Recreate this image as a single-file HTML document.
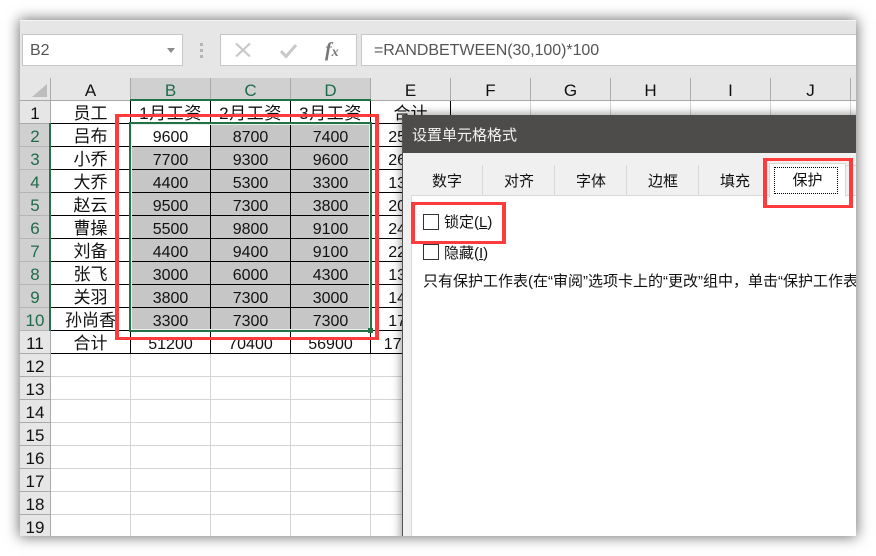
<!DOCTYPE html>
<html lang="zh"><head><meta charset="utf-8"><title>设置单元格格式</title>
<style>
*{box-sizing:border-box}
html,body{margin:0;padding:0;width:876px;height:556px;background:#fff;overflow:hidden}
body{font-family:"Liberation Sans","Noto Sans CJK SC",sans-serif;color:#222}
.a{position:absolute}
#win{position:absolute;left:20px;top:20px;width:836px;height:516px;background:#fff;overflow:hidden;box-shadow:0 0 13px 1px rgba(0,0,0,.55)}
#w{position:absolute;left:-20px;top:-20px;width:876px;height:556px;overflow:hidden}
.box{position:absolute;background:#fff;border:1px solid #c6c6c6;top:34px;height:32px}
.ch{position:absolute;top:78px;height:22px;width:80px;text-align:center;font-size:17px;line-height:25px;color:#111;border-right:1px solid #aaa}
.ch.s{background:#d0d0d0;color:#1f6b4b}
.rh{position:absolute;left:20px;width:30px;height:23px;text-align:center;font-size:17px;line-height:26px;background:#e6e6e6;color:#111;border-bottom:1px solid #aaa;overflow:hidden}
.rh.s{background:#d0d0d0;color:#1f6b4b;border-bottom-color:#b5b5b5}
#t{position:absolute;left:51px;top:101px;border-collapse:separate;border-spacing:0;table-layout:fixed;width:400px}
#t td{width:80px;height:23px;padding:5px 0 0;border-right:1px solid #000;border-bottom:1px solid #000;text-align:center;font-size:16px;line-height:17px;color:#111;overflow:hidden;white-space:nowrap}
#t td.g{background:#c6c6c6}
#t td.c{font-size:17px;padding-top:4px;line-height:18px}
#t td.h{letter-spacing:.6px}
.red{position:absolute;border-style:solid;border-color:#ff3b3b;border-width:3px 4px}
.tab{position:absolute;top:165px;height:30px;width:72px;text-align:center;font-size:15px;line-height:34px;border-right:1px solid #d9d9d9;background:#f0f0f0;padding-left:1px;color:#111}
</style></head><body>
<div id="win"><div id="w">
<div class="a" style="left:20px;top:20px;width:836px;height:80px;background:#e6e6e6"></div>
<div class="a" style="left:20px;top:20px;width:836px;height:1px;background:#f4f4f4"></div>

<div class="box" style="left:22px;width:161px"></div>
<div class="a" style="left:30px;top:41px;font-size:16px;line-height:20px;color:#555">B2</div>
<svg class="a" style="left:167px;top:48px" width="9" height="5"><path d="M0 0H8L4 5Z" fill="#8a8a8a"/></svg>
<div class="a" style="left:200px;top:43px;width:3px;height:3px;background:#b4b4b4"></div>
<div class="a" style="left:200px;top:49px;width:3px;height:3px;background:#b4b4b4"></div>
<div class="a" style="left:200px;top:55px;width:3px;height:3px;background:#b4b4b4"></div>
<div class="box" style="left:220px;width:137px"></div>
<svg class="a" style="left:234px;top:42px" width="18" height="16"><path d="M2 1.5L16 14.5M16 1.5L2 14.5" stroke="#c8c8c8" stroke-width="2.2" fill="none"/></svg>
<svg class="a" style="left:279px;top:42px" width="19" height="17"><path d="M2 9L7 14.5L17 3" stroke="#c8c8c8" stroke-width="3" fill="none"/></svg>
<div class="a" style="left:325px;top:38px;font-family:'Liberation Serif',serif;font-style:italic;font-weight:bold;font-size:20px;line-height:24px;color:#777">f<span style="font-size:14px">x</span></div>
<div class="box" style="left:361px;width:496px"></div>
<div class="a" style="left:374px;top:41px;font-size:16px;line-height:20px;color:#555;white-space:nowrap;letter-spacing:-.05px">=RANDBETWEEN(30,100)*100</div>

<svg class="a" style="left:20px;top:78px" width="31" height="23"><path d="M27 6V19H12Z" fill="#bdbdbd"/><path d="M30.5 0V23" stroke="#aaa"/></svg>
<div class="ch" style="left:51px">A</div>
<div class="ch s" style="left:131px">B</div>
<div class="ch s" style="left:211px">C</div>
<div class="ch s" style="left:291px">D</div>
<div class="ch" style="left:371px">E</div>
<div class="ch" style="left:451px">F</div>
<div class="ch" style="left:531px">G</div>
<div class="ch" style="left:611px">H</div>
<div class="ch" style="left:691px">I</div>
<div class="ch" style="left:771px">J</div>
<div class="a" style="left:20px;top:100px;width:836px;height:1px;background:#a8a8a8"></div>
<div class="a" style="left:130px;top:99px;width:241px;height:2px;background:#217346"></div>

<div class="rh" style="top:101px;height:23px">1</div>
<div class="rh s" style="top:124px">2</div>
<div class="rh s" style="top:147px">3</div>
<div class="rh s" style="top:170px">4</div>
<div class="rh s" style="top:193px">5</div>
<div class="rh s" style="top:216px">6</div>
<div class="rh s" style="top:239px">7</div>
<div class="rh s" style="top:262px">8</div>
<div class="rh s" style="top:285px">9</div>
<div class="rh s" style="top:308px">10</div>
<div class="rh" style="top:331px">11</div>
<div class="rh" style="top:354px">12</div>
<div class="rh" style="top:377px">13</div>
<div class="rh" style="top:400px">14</div>
<div class="rh" style="top:423px">15</div>
<div class="rh" style="top:446px">16</div>
<div class="rh" style="top:469px">17</div>
<div class="rh" style="top:492px">18</div>
<div class="rh" style="top:515px">19</div>
<div class="a" style="left:50px;top:101px;width:1px;height:435px;background:#aaa"></div>
<div class="a" style="left:49px;top:123px;width:2px;height:208px;background:#217346"></div>

<div class="a" style="left:51px;top:101px;width:805px;height:435px;background-image:linear-gradient(to right,#d4d4d4 1px,transparent 1px),linear-gradient(to bottom,#d4d4d4 1px,transparent 1px);background-size:80px 23px;background-position:79px 22px"></div>

<table id="t">
<tr><td class="c">员工</td><td class="c h">1月工资</td><td class="c h">2月工资</td><td class="c h">3月工资</td><td class="c">合计</td></tr>
<tr><td class="c">吕布</td><td>9600</td><td class="g">8700</td><td class="g">7400</td><td>25700</td></tr>
<tr><td class="c">小乔</td><td class="g">7700</td><td class="g">9300</td><td class="g">9600</td><td>26600</td></tr>
<tr><td class="c">大乔</td><td class="g">4400</td><td class="g">5300</td><td class="g">3300</td><td>13000</td></tr>
<tr><td class="c">赵云</td><td class="g">9500</td><td class="g">7300</td><td class="g">3800</td><td>20600</td></tr>
<tr><td class="c">曹操</td><td class="g">5500</td><td class="g">9800</td><td class="g">9100</td><td>24400</td></tr>
<tr><td class="c">刘备</td><td class="g">4400</td><td class="g">9400</td><td class="g">9100</td><td>22900</td></tr>
<tr><td class="c">张飞</td><td class="g">3000</td><td class="g">6000</td><td class="g">4300</td><td>13300</td></tr>
<tr><td class="c">关羽</td><td class="g">3800</td><td class="g">7300</td><td class="g">3000</td><td>14100</td></tr>
<tr><td class="c">孙尚香</td><td class="g">3300</td><td class="g">7300</td><td class="g">7300</td><td>17900</td></tr>
<tr><td class="c">合计</td><td>51200</td><td>70400</td><td>56900</td><td>178500</td></tr>
</table>

<div class="a" style="left:129px;top:122px;width:243px;height:210px;border:2px solid #217346"></div>
<div class="a" style="left:131px;top:124px;width:239px;height:206px;border:1px solid #eee"></div>
<div class="a" style="left:368px;top:328px;width:5px;height:5px;background:#217346"></div>

<!-- dialog -->
<div class="a" style="left:402px;top:115px;width:460px;height:430px;background:#f0f0f0;border-left:1px solid #555;box-shadow:0 0 9px 1px rgba(0,0,0,.4)"></div>
<div class="a" style="left:403px;top:115px;width:460px;height:38px;background:#4e4c4a;color:#f2f2f2;font-size:15px;line-height:41px;padding-left:9px">设置单元格格式</div>
<div class="a" style="left:411px;top:165px;width:445px;height:1px;background:#d9d9d9"></div>
<div class="tab" style="left:411px">数字</div>
<div class="tab" style="left:483px">对齐</div>
<div class="tab" style="left:555px">字体</div>
<div class="tab" style="left:627px">边框</div>
<div class="tab" style="left:699px">填充</div>
<div class="a" style="left:411px;top:195px;width:445px;height:341px;background:#fff;border-left:1px solid #d9d9d9;border-top:1px solid #d9d9d9"></div>
<div class="a" style="left:769px;top:163px;width:77px;height:34px;background:#fff;border:1px solid #d9d9d9;border-bottom:0;text-align:center;font-size:15px;line-height:34px;color:#111">保护</div>
<div class="a" style="left:774px;top:167px;width:64px;height:27px;border:1px dotted #000"></div>

<div class="a" style="left:423px;top:214px;width:16px;height:16px;background:#fff;border:1px solid #333"></div>
<div class="a" style="left:444px;top:213px;font-size:15px;line-height:20px;white-space:nowrap;color:#111">锁定(<u>L</u>)</div>
<div class="a" style="left:423px;top:244px;width:16px;height:16px;background:#fff;border:1px solid #333"></div>
<div class="a" style="left:444px;top:244px;font-size:15px;line-height:20px;white-space:nowrap;color:#111">隐藏(<u>I</u>)</div>
<div class="a" style="left:423px;top:272px;width:433px;overflow:hidden;font-size:15px;line-height:20px;white-space:nowrap;color:#111">只有保护工作表(在“审阅”选项卡上的“更改”组中，单击“保护工作表”按钮后，锁定单元格</div>

<div class="red" style="left:115px;top:114px;width:264px;height:226px"></div>
<div class="red" style="left:763px;top:158px;width:90px;height:50px"></div>
<div class="red" style="left:411px;top:202px;width:95px;height:42px"></div>
</div></div>
</body></html>
